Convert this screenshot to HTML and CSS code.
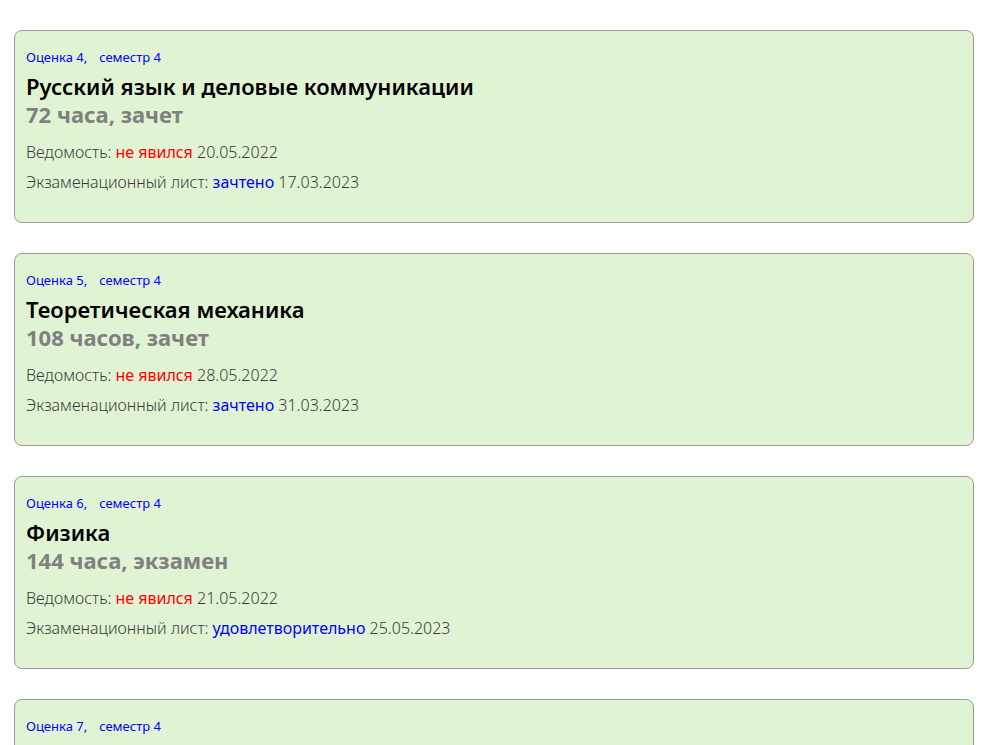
FILE: index.html
```html
<!DOCTYPE html>
<html lang="ru">
<head>
<meta charset="utf-8">
<link rel="stylesheet" href="styles.css">
</head>
<body>
<div class="list">
  <div class="card">
    <div class="meta"><span>Оценка 4,</span><span class="sem">семестр 4</span></div>
    <div class="title">Русский язык и деловые коммуникации</div>
    <div class="hours">72 часа, зачет</div>
    <div class="row first">Ведомость: <span class="red">не явился</span> 20.05.2022</div>
    <div class="row">Экзаменационный лист: <span class="blue">зачтено</span> 17.03.2023</div>
  </div>
  <div class="card">
    <div class="meta"><span>Оценка 5,</span><span class="sem">семестр 4</span></div>
    <div class="title">Теоретическая механика</div>
    <div class="hours">108 часов, зачет</div>
    <div class="row first">Ведомость: <span class="red">не явился</span> 28.05.2022</div>
    <div class="row">Экзаменационный лист: <span class="blue">зачтено</span> 31.03.2023</div>
  </div>
  <div class="card">
    <div class="meta"><span>Оценка 6,</span><span class="sem">семестр 4</span></div>
    <div class="title">Физика</div>
    <div class="hours">144 часа, экзамен</div>
    <div class="row first">Ведомость: <span class="red">не явился</span> 21.05.2022</div>
    <div class="row">Экзаменационный лист: <span class="blue">удовлетворительно</span> 25.05.2023</div>
  </div>
  <div class="card">
    <div class="meta"><span>Оценка 7,</span><span class="sem">семестр 4</span></div>
  </div>
</div>
</body>
</html>
```
FILE: styles.css
```css
html, body {
  margin: 0;
  padding: 0;
  background: #fff;
}
body {
  font-family: "Noto Sans", "Open Sans", sans-serif;
  overflow: hidden;
  height: 745px;
}
.list {
  padding: 30px 15px 0 14px;
}
.card {
  border: 1px solid #9a9a9a;
  border-radius: 8px;
  background: #e0f4d4;
  padding: 16px 11px 25px;
  margin-bottom: 30px;
  min-height: 100px;
}
.meta {
  font-size: 13px;
  line-height: 20px;
  color: #0000ff;
}
.sem {
  margin-left: 12px;
}
.title {
  margin-top: 5px;
  font-size: 22px;
  font-weight: 600;
  line-height: 28px;
  color: #000;
}
.hours {
  font-size: 22px;
  font-weight: 700;
  line-height: 28px;
  color: #808080;
}
.row {
  font-size: 16px;
  font-weight: 300;
  line-height: 30px;
  color: #3a3a3a;
}
.row.first {
  margin-top: 9px;
}
.red {
  color: #ff0000;
  font-weight: 400;
}
.blue {
  color: #0000ff;
  font-weight: 400;
}
```
